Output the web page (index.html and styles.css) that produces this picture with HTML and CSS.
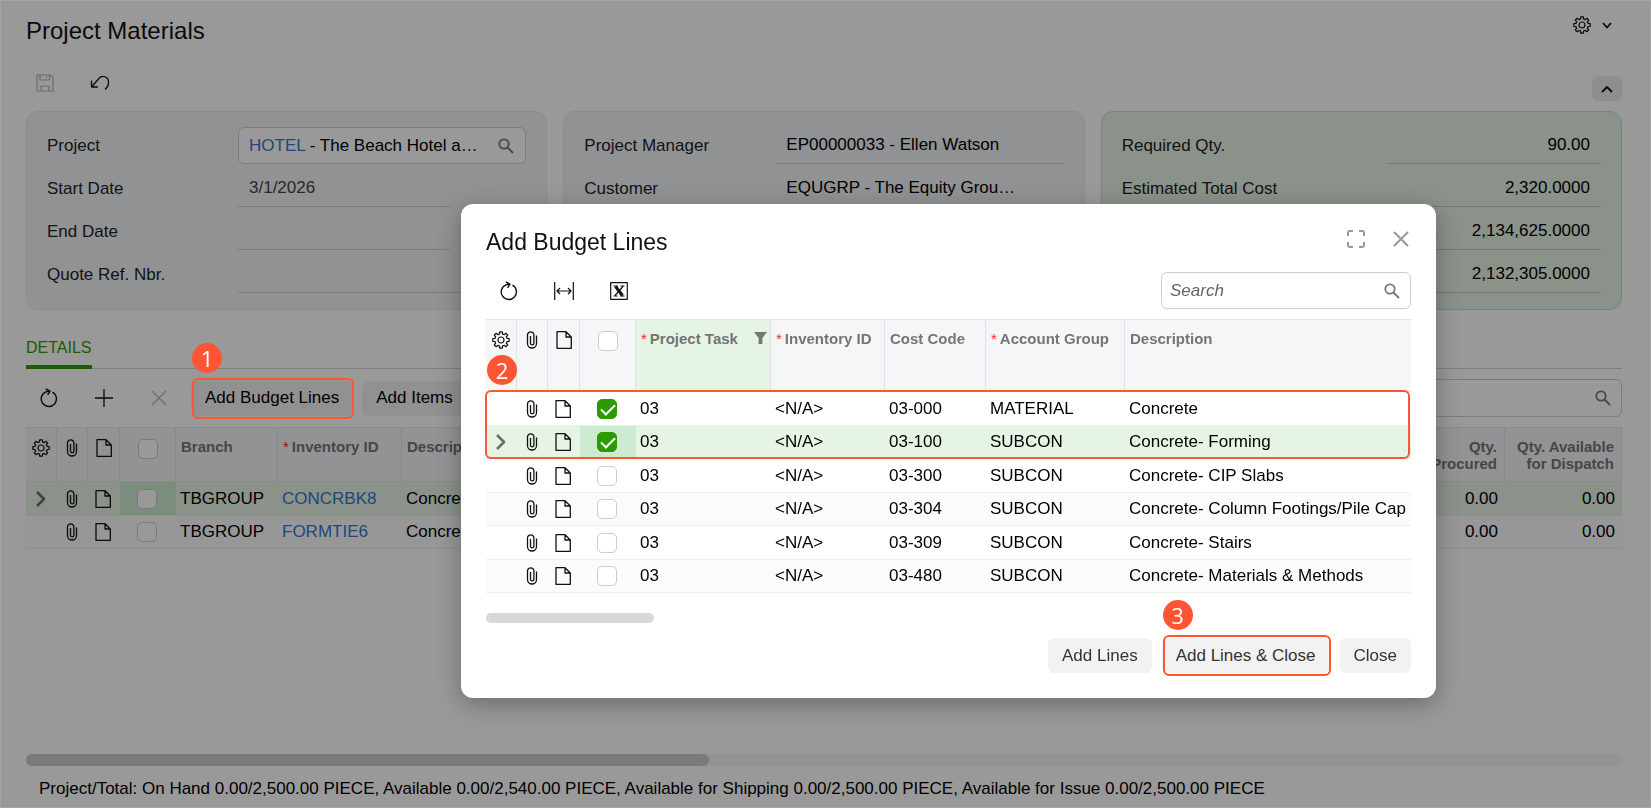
FILE: index.html
```html
<!DOCTYPE html>
<html lang="en">
<head>
    <meta charset="UTF-8">
    <title>Project Materials</title>
    <link rel="stylesheet" href="styles.css">
</head>
<body>
    <!-- icon set -->
    <svg class="icon-set" aria-hidden="true">
        <symbol id="i-gear" viewBox="-9 -9 18 18"><path d="M-1.5-6.1L-1.3-8.2H1.3L1.5-6.1L3.25-5.37L4.88-6.72L6.72-4.88L5.37-3.25L6.1-1.5L8.2-1.3V1.3L6.1 1.5L5.37 3.25L6.72 4.88L4.88 6.72L3.25 5.37L1.5 6.1L1.3 8.2H-1.3L-1.5 6.1L-3.25 5.37L-4.88 6.72L-6.72 4.88L-5.37 3.25L-6.1 1.5L-8.2 1.3V-1.3L-6.1-1.5L-5.37-3.25L-6.72-4.88L-4.88-6.72L-3.25-5.37Z"/><circle r="3"/></symbol>
        <symbol id="i-clip" viewBox="0 0 18 18"><path d="M13.500 4.500V12.500a4.500 4.500 0 0 1-9 0V4a3.200 3.200 0 0 1 6.400 0V12.200a1.700 1.700 0 0 1-3.400 0V5"/></symbol>
        <symbol id="i-doc" viewBox="0 0 18 18"><path d="M2 .7H11L16.300 6V17.300H2ZM11 .7V6H16.300"/></symbol>
        <symbol id="i-search" viewBox="0 0 18 18"><circle cx="7" cy="7" r="4.700"/><path d="M10.500 10.500L16 16"/></symbol>
        <symbol id="i-refresh" viewBox="0 0 18 20"><path d="M12.500 4.200A7.600 7.600 0 1 1 6 3.800L9.500 3.300M5.700 .8L10 3.200L7.600 7"/></symbol>
        <symbol id="i-x" viewBox="0 0 18 18"><path d="M2 2L16 16M16 2L2 16"/></symbol>
        <symbol id="i-plus" viewBox="0 0 18 18"><path d="M9 0V18M0 9H18"/></symbol>
        <symbol id="i-save" viewBox="0 0 18 18"><path d="M1 1H14.500L17 3.500V17H1ZM4 1V6H13.500V1M10.500 2.500V4M5 17V12H13V17"/></symbol>
        <symbol id="i-undo" viewBox="0 0 20 18"><path d="M2 12.500L8 5.500C12-.5 19 3 18.500 9C18.300 12 17 14 15 15.500M1.500 6.500V13H8"/></symbol>
        <symbol id="i-right" viewBox="0 0 12 18"><path d="M2 2L9 9L2 16"/></symbol>
        <symbol id="i-down" viewBox="0 0 12 12"><path d="M2 4L6 8.500L10 4"/></symbol>
        <symbol id="i-up" viewBox="0 0 12 12"><path d="M1 9L6 4L11 9"/></symbol>
        <symbol id="i-fit" viewBox="0 0 20 18"><path d="M.7 0V18M19.300 0V18M3 9H17M6 6L3 9L6 12M14 6L17 9L14 12"/></symbol>
        <symbol id="i-excel" viewBox="0 0 18 18"><rect x=".7" y=".7" width="16.600" height="16.600"/><path d="M3.500 4H8M10.500 4H14.500M3.500 14H7.500M10 14H14.500M13 4.500L5 13.500"/><path class="thick" d="M5.500 4.500L12.500 13.500"/></symbol>
        <symbol id="i-full" viewBox="0 0 18 18"><path d="M1 6V3a2 2 0 0 1 2-2H6M12 1H15a2 2 0 0 1 2 2V6M17 12V15a2 2 0 0 1-2 2H12M6 17H3a2 2 0 0 1-2-2V12"/></symbol>
        <symbol id="i-filter" viewBox="0 0 14 14"><path d="M0 .5H14L9 7V13.500H5V7Z"/></symbol>
    </svg>

    <div class="page">
        <header class="page-header">
            <h1>Project Materials</h1>
            <button class="settings" aria-label="Settings"><svg class="icon"><use href="#i-gear"/></svg><svg class="icon-small"><use href="#i-down"/></svg></button>
        </header>

        <div class="actions">
            <button class="action disabled" aria-label="Save" disabled><svg class="icon"><use href="#i-save"/></svg></button>
            <button class="action" aria-label="Undo"><svg class="icon wide bold"><use href="#i-undo"/></svg></button>
            <button class="collapse" aria-label="Collapse"><svg class="icon-small"><use href="#i-up"/></svg></button>
        </div>

        <section class="panels">
            <div class="panel">
                <div class="row">
                    <span class="label">Project</span>
                    <div class="field lookup"><span class="ellipsis"><a href="#">HOTEL</a> - The Beach Hotel and Resort</span><svg class="icon search-icon"><use href="#i-search"/></svg></div>
                </div>
                <div class="row">
                    <label for="startDate">Start Date</label>
                    <input class="field date" id="startDate" value="3/1/2026" readonly>
                </div>
                <div class="row">
                    <label for="endDate">End Date</label>
                    <input class="field date" id="endDate" readonly>
                </div>
                <div class="row">
                    <label for="quoteRef">Quote Ref. Nbr.</label>
                    <input class="field" id="quoteRef" readonly>
                </div>
            </div>
            <div class="panel">
                <div class="row">
                    <label for="manager">Project Manager</label>
                    <input class="field" id="manager" value="EP00000033 - Ellen Watson" readonly>
                </div>
                <div class="row">
                    <label for="customer">Customer</label>
                    <input class="field short" id="customer" value="EQUGRP - The Equity Group Investors" readonly>
                </div>
            </div>
            <div class="panel totals">
                <div class="row">
                    <label for="reqQty">Required Qty.</label>
                    <input class="field" id="reqQty" value="90.00" readonly>
                </div>
                <div class="row">
                    <label for="estCost">Estimated Total Cost</label>
                    <input class="field" id="estCost" value="2,320.0000" readonly>
                </div>
                <div class="row">
                    <label for="budget">Budget</label>
                    <input class="field" id="budget" value="2,134,625.0000" readonly>
                </div>
                <div class="row">
                    <label for="remainder">Remainder</label>
                    <input class="field" id="remainder" value="2,132,305.0000" readonly>
                </div>
            </div>
        </section>

        <nav class="tabs"><a href="#" class="tab">DETAILS</a></nav>

        <div class="toolbar details-toolbar">
            <button class="tool" aria-label="Refresh"><svg class="icon tall"><use href="#i-refresh"/></svg></button>
            <button class="tool" aria-label="Add row"><svg class="icon bold"><use href="#i-plus"/></svg></button>
            <button class="tool disabled" aria-label="Delete row" disabled><svg class="icon bold"><use href="#i-x"/></svg></button>
            <div class="marked">
                <button class="btn">Add Budget Lines</button>
                <span class="callout-box"></span>
                <span class="badge">1</span>
            </div>
            <button class="btn">Add Items</button>
            <div class="search"><input type="search" aria-label="Search details"><svg class="icon search-icon"><use href="#i-search"/></svg></div>
        </div>

        <table class="grid details-grid">
            <colgroup>
                <col class="c-gear"><col class="c-clip"><col class="c-doc"><col class="c-check">
                <col class="c-branch"><col class="c-item"><col><col class="c-qty"><col class="c-dispatch">
            </colgroup>
            <thead>
                <tr>
                    <th class="ic"><svg class="icon"><use href="#i-gear"/></svg></th>
                    <th class="ic"><svg class="icon bold"><use href="#i-clip"/></svg></th>
                    <th class="ic"><svg class="icon bold"><use href="#i-doc"/></svg></th>
                    <th class="ic"><input type="checkbox" aria-label="Select all"></th>
                    <th>Branch</th>
                    <th><span class="req">*</span>Inventory ID</th>
                    <th>Description</th>
                    <th class="num">Qty. Procured</th>
                    <th class="num">Qty. Available for Dispatch</th>
                </tr>
            </thead>
            <tbody>
                <tr class="current">
                    <td class="ic"><svg class="icon arrow"><use href="#i-right"/></svg></td>
                    <td class="ic"><svg class="icon bold"><use href="#i-clip"/></svg></td>
                    <td class="ic"><svg class="icon bold"><use href="#i-doc"/></svg></td>
                    <td class="ic check"><input type="checkbox" aria-label="Select CONCRBK8"></td>
                    <td>TBGROUP</td><td><a href="#">CONCRBK8</a></td><td>Concrete block</td>
                    <td class="num">0.00</td><td class="num">0.00</td>
                </tr>
                <tr>
                    <td class="ic"></td>
                    <td class="ic"><svg class="icon bold"><use href="#i-clip"/></svg></td>
                    <td class="ic"><svg class="icon bold"><use href="#i-doc"/></svg></td>
                    <td class="ic"><input type="checkbox" aria-label="Select FORMTIE6"></td>
                    <td>TBGROUP</td><td><a href="#">FORMTIE6</a></td><td>Concrete form tie</td>
                    <td class="num">0.00</td><td class="num">0.00</td>
                </tr>
            </tbody>
        </table>

        <div class="scroll-track"><div class="scroll-thumb"></div></div>
        <footer class="status">Project/Total: On Hand 0.00/2,500.00 PIECE, Available 0.00/2,540.00 PIECE, Available for Shipping 0.00/2,500.00 PIECE, Available for Issue 0.00/2,500.00 PIECE</footer>
    </div>

    <div class="overlay"></div>

    <div class="modal" role="dialog" aria-labelledby="modalTitle">
        <header class="modal-header">
            <h2 id="modalTitle">Add Budget Lines</h2>
            <button class="win-btn" aria-label="Full screen"><svg class="icon"><use href="#i-full"/></svg></button>
            <button class="win-btn" aria-label="Close window"><svg class="icon heavy"><use href="#i-x"/></svg></button>
        </header>

        <div class="toolbar">
            <button class="tool" aria-label="Refresh"><svg class="icon tall"><use href="#i-refresh"/></svg></button>
            <button class="tool" aria-label="Fit to width"><svg class="icon wide"><use href="#i-fit"/></svg></button>
            <button class="tool" aria-label="Export to Excel"><svg class="icon"><use href="#i-excel"/></svg></button>
            <div class="search"><input type="search" placeholder="Search" aria-label="Search lines"><svg class="icon search-icon"><use href="#i-search"/></svg></div>
        </div>

        <div class="lines">
            <table class="grid lines-grid">
                <colgroup>
                    <col class="c-gear"><col class="c-clip"><col class="c-doc"><col class="c-check">
                    <col class="c-task"><col class="c-inv"><col class="c-cost"><col class="c-group"><col>
                </colgroup>
                <thead>
                    <tr>
                        <th class="ic"><svg class="icon"><use href="#i-gear"/></svg></th>
                        <th class="ic"><svg class="icon bold"><use href="#i-clip"/></svg></th>
                        <th class="ic"><svg class="icon bold"><use href="#i-doc"/></svg></th>
                        <th class="ic"><input type="checkbox" aria-label="Select all lines"></th>
                        <th class="filtered"><span class="req">*</span>Project Task<svg class="filter"><use href="#i-filter"/></svg></th>
                        <th><span class="req">*</span>Inventory ID</th>
                        <th>Cost Code</th>
                        <th><span class="req">*</span>Account Group</th>
                        <th>Description</th>
                    </tr>
                </thead>
                <tbody>
                    <tr>
                        <td class="ic"></td>
                        <td class="ic"><svg class="icon bold"><use href="#i-clip"/></svg></td>
                        <td class="ic"><svg class="icon bold"><use href="#i-doc"/></svg></td>
                        <td class="ic"><input type="checkbox" aria-label="Select 03-000" checked></td>
                        <td>03</td><td>&lt;N/A&gt;</td><td>03-000</td><td>MATERIAL</td><td>Concrete</td>
                    </tr>
                    <tr class="current">
                        <td class="ic"><svg class="icon arrow"><use href="#i-right"/></svg></td>
                        <td class="ic"><svg class="icon bold"><use href="#i-clip"/></svg></td>
                        <td class="ic"><svg class="icon bold"><use href="#i-doc"/></svg></td>
                        <td class="ic check"><input type="checkbox" aria-label="Select 03-100" checked></td>
                        <td>03</td><td>&lt;N/A&gt;</td><td>03-100</td><td>SUBCON</td><td>Concrete- Forming</td>
                    </tr>
                    <tr>
                        <td class="ic"></td>
                        <td class="ic"><svg class="icon bold"><use href="#i-clip"/></svg></td>
                        <td class="ic"><svg class="icon bold"><use href="#i-doc"/></svg></td>
                        <td class="ic"><input type="checkbox" aria-label="Select 03-300"></td>
                        <td>03</td><td>&lt;N/A&gt;</td><td>03-300</td><td>SUBCON</td><td>Concrete- CIP Slabs</td>
                    </tr>
                    <tr>
                        <td class="ic"></td>
                        <td class="ic"><svg class="icon bold"><use href="#i-clip"/></svg></td>
                        <td class="ic"><svg class="icon bold"><use href="#i-doc"/></svg></td>
                        <td class="ic"><input type="checkbox" aria-label="Select 03-304"></td>
                        <td>03</td><td>&lt;N/A&gt;</td><td>03-304</td><td>SUBCON</td><td>Concrete- Column Footings/Pile Cap</td>
                    </tr>
                    <tr>
                        <td class="ic"></td>
                        <td class="ic"><svg class="icon bold"><use href="#i-clip"/></svg></td>
                        <td class="ic"><svg class="icon bold"><use href="#i-doc"/></svg></td>
                        <td class="ic"><input type="checkbox" aria-label="Select 03-309"></td>
                        <td>03</td><td>&lt;N/A&gt;</td><td>03-309</td><td>SUBCON</td><td>Concrete- Stairs</td>
                    </tr>
                    <tr>
                        <td class="ic"></td>
                        <td class="ic"><svg class="icon bold"><use href="#i-clip"/></svg></td>
                        <td class="ic"><svg class="icon bold"><use href="#i-doc"/></svg></td>
                        <td class="ic"><input type="checkbox" aria-label="Select 03-480"></td>
                        <td>03</td><td>&lt;N/A&gt;</td><td>03-480</td><td>SUBCON</td><td>Concrete- Materials &amp; Methods</td>
                    </tr>
                </tbody>
            </table>
            <span class="callout-box"></span>
            <span class="badge">2</span>
        </div>

        <div class="lines-scroll"></div>

        <footer class="modal-footer">
            <button class="btn">Add Lines</button>
            <div class="marked">
                <button class="btn">Add Lines &amp; Close</button>
                <span class="callout-box"></span>
                <span class="badge">3</span>
            </div>
            <button class="btn">Close</button>
        </footer>
    </div>
</body>
</html>
```

FILE: styles.css
```css
* {
    box-sizing: border-box;
}
body {
    margin: 0;
    background: #fff;
    color: #000;
    font-family: "Liberation Sans", Arial, sans-serif;
    font-size: 17px;
}
h1, h2 {
    margin: 0;
    font-weight: normal;
    color: #111;
}
a {
    color: #3279cc;
    text-decoration: none;
}
button, input {
    font: inherit;
    color: inherit;
}
button {
    padding: 0;
    border: none;
    background: none;
}

/* icons */
.icon-set {
    display: none;
}
.icon, .icon-small {
    display: block;
    flex: none;
    width: 18px;
    height: 18px;
    fill: none;
    stroke: #111;
    stroke-width: 1.2;
    stroke-linejoin: round;
}
.icon-small {
    width: 12px;
    height: 12px;
    stroke-width: 1.8;
}
.icon.wide {
    width: 20px;
}
.icon.tall {
    height: 20px;
    stroke-width: 1.4;
}
.icon.bold {
    stroke-width: 1.3;
}
.icon.heavy {
    stroke-width: 2;
}
.icon.arrow {
    width: 12px;
    stroke: #6b6b6b;
    stroke-width: 2.6;
}
.icon.search-icon {
    stroke: #777;
    stroke-width: 1.8;
}
.disabled .icon {
    stroke: #b4b4b4;
}
.thick {
    stroke-width: 3;
}

/* page */
.page {
    display: flex;
    flex-direction: column;
    min-height: 100vh;
    padding: 0 29px 0 26px;
}
.page-header {
    display: flex;
    justify-content: space-between;
    align-items: flex-start;
    height: 65px;
    padding-top: 16px;
}
.page-header h1 {
    font-size: 24px;
    line-height: 30px;
}
.settings {
    display: flex;
    align-items: center;
    gap: 10px;
    padding-right: 9px;
}
.actions {
    display: flex;
    gap: 17px;
    height: 36px;
}
.action {
    width: 38px;
    display: flex;
    align-items: center;
    justify-content: center;
}
.collapse {
    display: flex;
    align-items: center;
    justify-content: center;
    align-self: flex-end;
    width: 30px;
    height: 25px;
    margin-left: auto;
    border-radius: 6px;
    background: #ededed;
}

/* summary panels */
.panels {
    display: grid;
    grid-template-columns: repeat(3, minmax(0, 1fr));
    gap: 16px;
    margin-top: 10px;
}
.panel {
    display: flex;
    flex-direction: column;
    gap: 6px;
    padding: 15px 20px 16px;
    border: 1px solid #e6e9ee;
    border-radius: 12px;
    background: #f2f4f7;
}
.panel.totals {
    border-color: #c4e3c6;
    background: #e6f4e6;
}
.row {
    display: flex;
    align-items: center;
    height: 37px;
    color: #222;
}
.row label, .row .label {
    flex: none;
    width: 191px;
}
.field {
    flex: 1;
    min-width: 0;
    height: 37px;
    padding: 0 11px;
    border: none;
    border-bottom: 1px solid #cfd1d4;
    border-radius: 0;
    background: none;
    color: #000;
    text-overflow: ellipsis;
}
.field.date {
    flex: none;
    width: 212px;
    color: #444;
}
.field.short {
    padding-right: 40px;
}
.field.lookup {
    display: flex;
    align-items: center;
    gap: 12px;
    padding: 0 10px;
    border: 1px solid #cfd1d4;
    border-radius: 6px;
    background: #fff;
}
.ellipsis {
    flex: 1;
    overflow: hidden;
    text-overflow: ellipsis;
    white-space: nowrap;
}
.totals .row {
    justify-content: space-between;
}
.totals .field {
    flex: none;
    width: 214px;
    border-color: #bccabc;
    text-align: right;
}

/* tabs */
.tabs {
    display: flex;
    margin-top: 21px;
    box-shadow: inset 0 -1px #d4d4d4;
}
.tab {
    border-bottom: 4px solid #2d9b00;
    border-radius: 3px 3px 0 0;
    color: #2d9b00;
    font-size: 16px;
    line-height: 34px;
}

/* toolbars */
.toolbar {
    display: flex;
    align-items: center;
    gap: 9px;
    height: 37px;
}
.details-toolbar {
    height: 38px;
    margin: 10px 0;
}
.tool {
    display: flex;
    align-items: center;
    justify-content: center;
    width: 46px;
    height: 35px;
}
.btn {
    height: 35px;
    padding: 0 14px;
    border-radius: 6px;
    background: #f2f2f2;
    white-space: nowrap;
}
.search {
    display: flex;
    align-items: center;
    width: 250px;
    height: 100%;
    margin-left: auto;
    padding: 0 9px 0 8px;
    border: 1px solid #cfcfcf;
    border-radius: 6px;
    background: #fff;
}
.search input {
    flex: 1;
    min-width: 0;
    padding: 0;
    border: none;
    outline: none;
    background: none;
}
.search input::placeholder {
    color: #666;
    font-style: italic;
}

/* grids */
.grid {
    width: 100%;
    table-layout: fixed;
    border-spacing: 0;
    border-top: 1px solid #e3e4e6;
}
.c-gear, .c-clip { width: 31px; }
.c-doc { width: 32px; }
.c-check { width: 56px; }
.c-branch { width: 102px; }
.c-item { width: 124px; }
.c-qty { width: 110px; }
.c-dispatch { width: 117px; }
.c-task { width: 135px; }
.c-inv { width: 114px; }
.c-cost { width: 101px; }
.c-group { width: 139px; }
.grid th {
    height: 54px;
    padding: 10px 5px 0;
    border-right: 1px solid #e0e2e5;
    border-bottom: 1px solid #e3e4e6;
    background: #f5f6f8;
    color: #757575;
    font-size: 15px;
    line-height: 17px;
    text-align: left;
    vertical-align: top;
}
.lines-grid th {
    height: 72px;
}
.lines-grid th:last-child {
    border-right: none;
}
.grid th.filtered {
    position: relative;
    background: #e6f4e6;
}
.filter {
    position: absolute;
    top: 11px;
    right: 3px;
    width: 13px;
    height: 14px;
    fill: #757575;
}
.req {
    margin-right: 3px;
    color: #f22;
    font-weight: normal;
}
.grid td {
    height: 34px;
    padding: 0 4px;
    overflow: hidden;
    border-bottom: 1px solid #e6f4e6;
    white-space: nowrap;
}
.grid tbody tr:nth-child(even) td {
    height: 33px;
    background: #fafcfb;
}
.grid tbody tr.current td {
    background: #e6f4e6;
}
.grid tbody tr.current td.check {
    background: #cdebcf;
}
.grid th.ic {
    padding: 11px 0 0;
}
.grid td.ic {
    padding: 0 2px 0 0;
}
.grid .ic .icon, .grid .ic input {
    margin: 0 auto;
}
.grid .num {
    padding-right: 7px;
    text-align: right;
}
.grid input {
    display: block;
    width: 20px;
    height: 20px;
    appearance: none;
    border: 1px solid #ccc;
    border-radius: 5px;
    background: #fff;
}
.grid input:checked {
    position: relative;
    border-color: #2d9b00;
    background: #2d9b00;
}
.grid input:checked::after {
    content: "";
    position: absolute;
    left: 6px;
    top: 1px;
    width: 6px;
    height: 12px;
    border: solid #fff;
    border-width: 0 2px 2px 0;
    transform: rotate(45deg);
}

/* page bottom */
.scroll-track {
    flex: none;
    height: 12px;
    margin-top: auto;
    border-radius: 6px;
    background: #f5f5f5;
}
.scroll-thumb {
    width: 683px;
    height: 12px;
    border-radius: 6px;
    background: #ccc;
}
.status {
    height: 42px;
    padding: 4px 13px 0;
    line-height: 38px;
    white-space: nowrap;
}

/* dialog */
.overlay {
    position: fixed;
    inset: 0;
    z-index: 10;
    border: 1px solid rgba(255, 255, 255, 0.1);
    background: rgba(0, 0, 0, 0.4);
}
.modal {
    position: absolute;
    left: 461px;
    right: 215px;
    top: 204px;
    z-index: 20;
    padding: 0 25px 25px;
    border-radius: 12px;
    background: #fff;
    box-shadow: 0 6px 24px rgba(0, 0, 0, 0.3);
}
.modal-header {
    display: flex;
    gap: 25px;
    height: 68px;
    padding-top: 20px;
}
.modal-header h2 {
    flex: 1;
    font-size: 23px;
    line-height: 36px;
}
.win-btn {
    display: flex;
    align-items: center;
    justify-content: center;
    width: 20px;
    height: 30px;
}
.win-btn .icon {
    stroke: #999;
    stroke-width: 2;
}
.lines {
    position: relative;
    margin-top: 10px;
}
.lines-scroll {
    width: 168px;
    height: 10px;
    margin-top: 20px;
    border-radius: 5px;
    background: #d8d8d8;
}
.modal-footer {
    display: flex;
    justify-content: flex-end;
    gap: 10px;
    margin-top: 15px;
    color: #333;
}

/* numbered callouts */
.marked {
    position: relative;
}
.callout-box {
    position: absolute;
    inset: -3px -1px -3px 1px;
    z-index: 15;
    border: 2px solid #ff5533;
    border-radius: 6px;
    pointer-events: none;
}
.lines .callout-box {
    inset: 71px 1px 134px -1px;
}
.badge {
    position: absolute;
    left: 1px;
    top: -38px;
    z-index: 15;
    width: 30px;
    height: 30px;
    border-radius: 50%;
    background: #ff5533;
    color: #fff;
    font-family: "Open Sans", sans-serif;
    font-size: 22px;
    line-height: 30px;
    text-align: center;
}
.lines .badge {
    top: 36px;
}
```
